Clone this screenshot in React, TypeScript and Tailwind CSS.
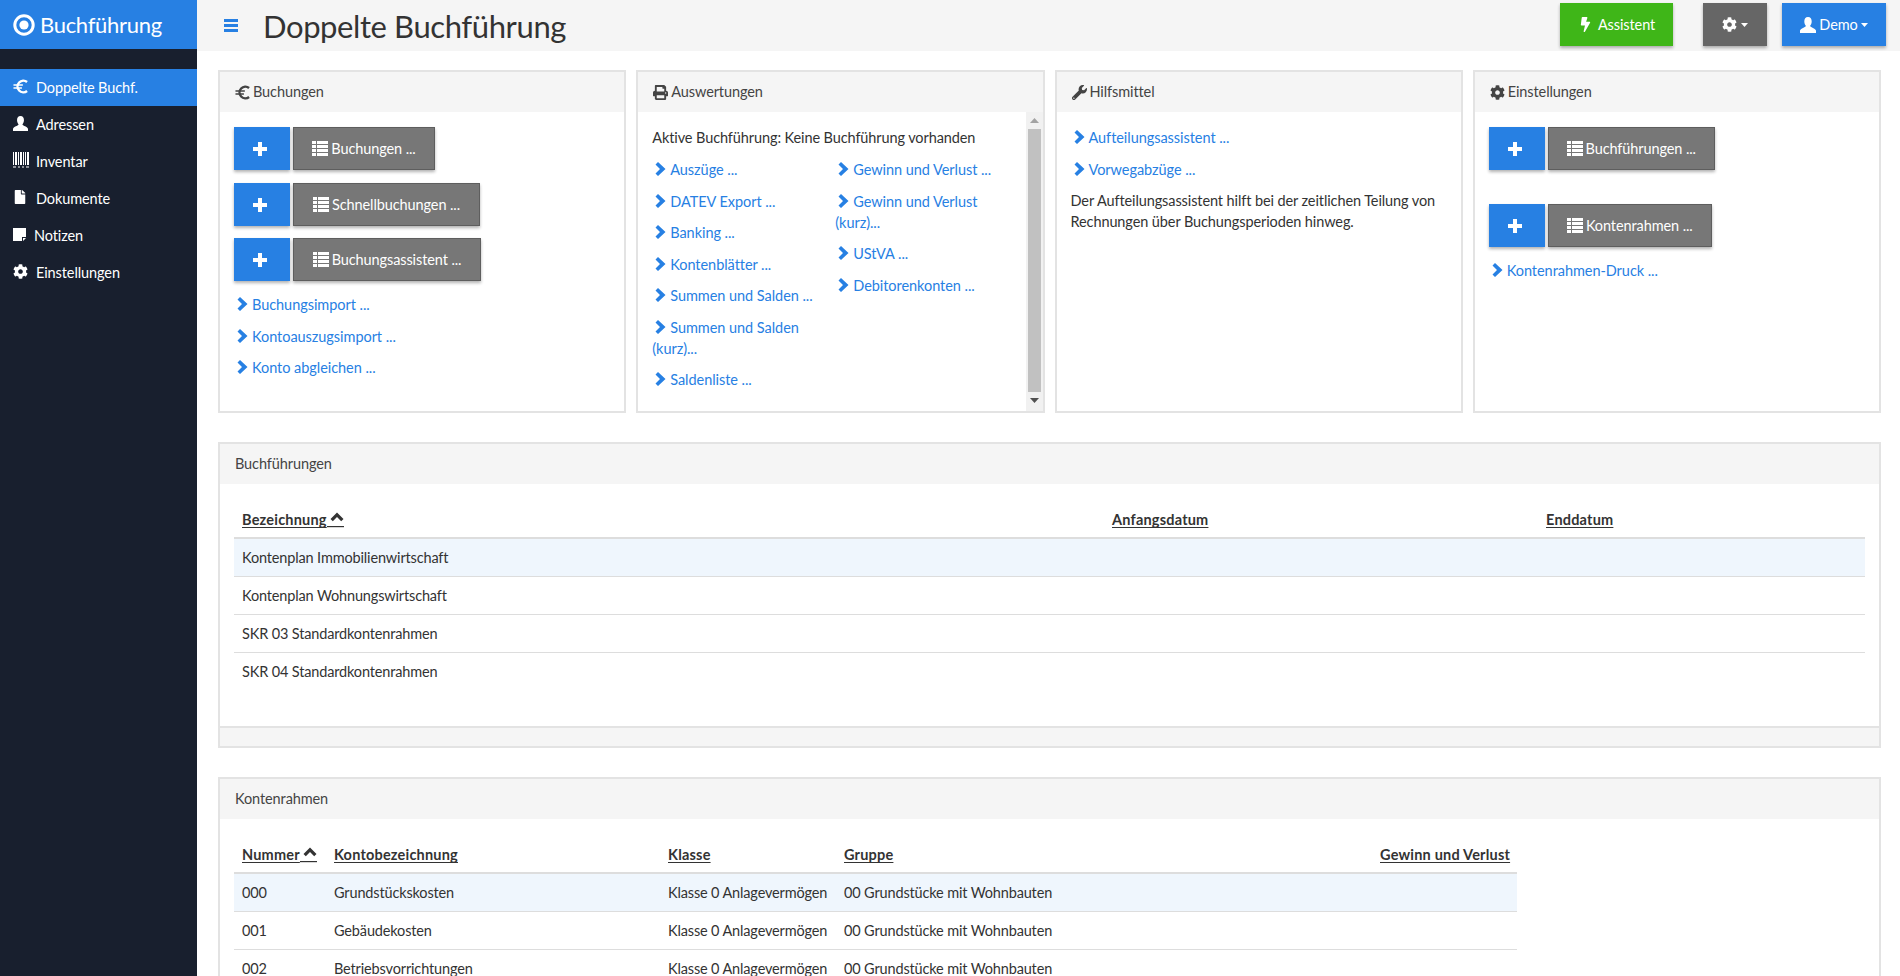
import React from "react";
import { FaBolt, FaCog, FaFile, FaPrint, FaWrench } from "react-icons/fa";

const Euro = ({ s = 15 }: { s?: number }) => (
  <svg width={s} height={s} viewBox="0 0 16 16" fill="none" stroke="currentColor">
    <path d="M15 3.2A6.2 6.2 0 1 0 15 12.8" strokeWidth="2.6" />
    <path d="M0.5 6.4H10.5M0.5 9.6H9.5" strokeWidth="1.6" />
  </svg>
);
const User = ({ s = 15 }: { s?: number }) => (
  <svg width={s} height={s} viewBox="0 0 16 16" fill="currentColor">
    <path d="M8 0C5.4 0 4.3 2 4.3 4.5 4.3 6.5 5.3 8 6 9 5 10.6 1 11 0 13.5V16H16V13.5C15 11 11 10.6 10 9 10.7 8 11.7 6.5 11.7 4.5 11.7 2 10.6 0 8 0Z" />
  </svg>
);
const Barcode = () => (
  <svg width="16" height="16" viewBox="0 0 16 16" fill="currentColor">
    <path d="M0 0H1V13H0ZM2 0H4V13H2ZM5 0H6V13H5ZM7 0H9V13H7ZM10 0H11V13H10ZM12 0H13V13H12ZM14 0H16V13H14ZM0 14.5H3V15.5H0ZM5 14.5H7V15.5H5ZM9 14.5H11V15.5H9ZM13 14.5H16V15.5H13Z" />
  </svg>
);
const Note = () => (
  <svg width="13" height="13" viewBox="0 0 13 13" fill="currentColor">
    <path d="M0 0H13V9H9V13H0ZM10 10H13L10 13Z" />
  </svg>
);
const Plus = () => (
  <svg width="14" height="14" viewBox="0 0 14 14" fill="currentColor">
    <path d="M5 0H9V5H14V9H9V14H5V9H0V5H5Z" />
  </svg>
);
const ThList = () => (
  <svg width="16" height="15" viewBox="0 0 16 15" fill="currentColor">
    <path d="M0 0H4V3H0ZM5 0H16V3H5ZM0 4H4V7H0ZM5 4H16V7H5ZM0 8H4V11H0ZM5 8H16V11H5ZM0 12H4V15H0ZM5 12H16V15H5Z" />
  </svg>
);
const Chevron = () => (
  <svg width="11" height="14" viewBox="0 0 11 14" fill="currentColor" className="mr-[4px] ml-[3px] inline-block align-[-1px]">
    <path d="M3 0L10.5 7L3 14L0.5 11.5L5 7L0.5 2.5Z" />
  </svg>
);
const SortUp = () => (
  <svg width="17" height="18" viewBox="0 0 17 18" fill="currentColor" className="inline-block align-[-4px]">
    <path d="M10 1.5L16.5 8L14.2 10.2L10 6L5.8 10.2L3.5 8Z" />
    <path d="M0 15H17V16.2H0Z" />
  </svg>
);
const Caret = () => (
  <svg width="7" height="4" viewBox="0 0 7 4"><path d="M0 0h7L3.5 4z" fill="#fff" /></svg>
);
const Ring = () => (
  <svg width="22" height="22" viewBox="0 0 22 22">
    <circle cx="11" cy="11" r="9.2" fill="none" stroke="#fff" strokeWidth="3" />
    <circle cx="11" cy="11" r="4.6" fill="#fff" />
  </svg>
);

const nav = [
  { label: "Doppelte Buchf.", icon: <Euro />, active: true, w: "w-[36px]" },
  { label: "Adressen", icon: <User />, w: "w-[36px]" },
  { label: "Inventar", icon: <Barcode />, w: "w-[36px]" },
  { label: "Dokumente", icon: <FaFile size={14} />, w: "w-[36px]" },
  { label: "Notizen", icon: <Note />, w: "w-[34px]" },
  { label: "Einstellungen", icon: <FaCog size={15} />, w: "w-[36px]" },
];

function ActionRow({ label, w, className = "" }: { label: string; w: string; className?: string }) {
  return (
    <div className={"flex gap-[3px] " + className}>
      <button className="flex h-[43px] w-[56px] items-center justify-center bg-[#2780e3] pr-[4px] text-white shadow-[0_2px_3px_rgba(0,0,0,0.3)]">
        <Plus />
      </button>
      <button className={"flex h-[43px] items-center justify-center gap-[3px] border border-[#5e5e5e] bg-[#777777] text-white shadow-[0_2px_3px_rgba(0,0,0,0.3)] " + w}>
        <ThList />
        <span>{label}</span>
      </button>
    </div>
  );
}

function LinkItem({ children, className = "" }: { children: React.ReactNode; className?: string }) {
  return (
    <a className={"block leading-[21px] tracking-[-0.05px] text-[#2780e3] " + className}>
      <Chevron />
      {children}
    </a>
  );
}

function Panel({ title, icon, children }: { title: string; icon: React.ReactNode; children: React.ReactNode }) {
  return (
    <section className="flex h-[343px] flex-col border-2 border-[#e3e3e3]">
      <header className="flex h-[40px] shrink-0 items-center gap-[3px] bg-[#f5f5f5] px-[15px] text-[#444]">
        {icon}
        <span>{title}</span>
      </header>
      {children}
    </section>
  );
}

function ScrollTrack() {
  return (
    <div className="flex w-[17px] shrink-0 flex-col items-center bg-[#f1f1f1]">
      <svg width="9" height="5" viewBox="0 0 9 5" className="mt-[6px] mb-[6px]"><path d="M4.5 0L9 5H0z" fill="#a3a3a3" /></svg>
      <div className="h-[263px] w-[13px] bg-[#c1c1c1]" />
      <svg width="9" height="5" viewBox="0 0 9 5" className="mt-[6px]"><path d="M4.5 5L9 0H0z" fill="#505050" /></svg>
    </div>
  );
}

function SortHead({ children, sorted }: { children: React.ReactNode; sorted?: boolean }) {
  return (
    <span className="leading-[21px] font-bold tracking-[0.2px] text-[#333]">
      <span className="underline underline-offset-2">{children}</span>
      {sorted && <SortUp />}
    </span>
  );
}

function TablePanel({ title, h, children }: { title: string; h?: string; children: React.ReactNode }) {
  return (
    <section className={"border-2 border-[#e3e3e3] " + (h ?? "")}>
      <header className="flex h-[40px] items-center bg-[#f5f5f5] px-[15px] text-[#444]">{title}</header>
      {children}
    </section>
  );
}

const Row = ({ cells, widths, first }: { cells: string[]; widths: string[]; first?: boolean }) => (
  <div className={"flex h-[38px] items-center border-b border-[#dddddd] tracking-[-0.15px] whitespace-nowrap text-[#333] " + (first ? "bg-[#eff6fd]" : "")}>
    {cells.map((c, i) => (
      <div key={i} className={"px-[8px] " + widths[i]}>{c}</div>
    ))}
  </div>
);

export default function App() {
  const w1 = ["w-[870px]", "w-[434px]", "flex-1"];
  const w2 = ["w-[92px]", "w-[334px]", "w-[176px]", "w-[536px]", "w-[145px]"];
  return (
    <div className="flex h-screen overflow-hidden bg-white font-[Lato,sans-serif] text-[14.5px] tracking-[-0.1px] text-[#333]">
      <aside className="w-[197px] shrink-0 bg-[#181f2e] text-white">
        <div className="flex h-[49px] items-center gap-[5px] bg-[#2780e3] pl-[13px] text-[22px] tracking-[-0.3px]">
          <Ring />
          <span>Buchführung</span>
        </div>
        <nav className="mt-[20px]">
          {nav.map((n) => (
            <div key={n.label} className={"flex h-[37px] items-center " + (n.active ? "bg-[#2780e3]" : "")}>
              <span className={"mb-[3px] flex justify-start pl-[13px] " + n.w}>{n.icon}</span>
              <span>{n.label}</span>
            </div>
          ))}
        </nav>
      </aside>
      <main className="min-w-0 flex-1">
        <div className="flex h-[51px] items-start bg-[#f5f5f5]">
          <svg width="14" height="13" viewBox="0 0 14 13" fill="#2780e3" className="mt-[19px] ml-[27px]"><path d="M0 0H14V3H0ZM0 5H14V8H0ZM0 10H14V13H0Z" /></svg>
          <h1 className="mt-[6px] ml-[25px] text-[31px] leading-[40px] tracking-[-0.4px] text-[#333]">Doppelte Buchführung</h1>
          <div className="mt-[3px] ml-auto flex pr-[14px] text-white">
            <button className="flex h-[43px] w-[113px] items-center justify-center gap-[5px] bg-[#3fb618] shadow-[0_2px_3px_rgba(0,0,0,0.3)]"><FaBolt size={15} /><span>Assistent</span></button>
            <button className="ml-[30px] flex h-[43px] w-[64px] items-center justify-center gap-[4px] bg-[#666666] shadow-[0_2px_3px_rgba(0,0,0,0.3)]"><FaCog size={15} /><Caret /></button>
            <button className="ml-[15px] flex h-[43px] w-[104px] items-center justify-center gap-[3px] bg-[#2780e3] shadow-[0_2px_3px_rgba(0,0,0,0.3)]"><User s={16} /><span>Demo</span><Caret /></button>
          </div>
        </div>
        <div className="pt-[19px] pr-[19px] pl-[21px]">
          <div className="grid grid-cols-4 gap-[10px]">
            <Panel title="Buchungen" icon={<Euro />}>
              <div className="px-[14px] pt-[15px]">
                <ActionRow label="Buchungen ..." w="w-[142px]" />
                <ActionRow label="Schnellbuchungen ..." w="w-[187px]" className="mt-[13px]" />
                <ActionRow label="Buchungsassistent ..." w="w-[188px]" className="mt-[12px]" />
                <div className="mt-[13px] space-y-[10.5px]">
                  <LinkItem>Buchungsimport ...</LinkItem>
                  <LinkItem>Kontoauszugsimport ...</LinkItem>
                  <LinkItem>Konto abgleichen ...</LinkItem>
                </div>
              </div>
            </Panel>
            <Panel title="Auswertungen" icon={<FaPrint size={15} />}>
              <div className="flex min-h-0 flex-1">
                <div className="min-w-0 flex-1 px-[14px] pt-[15px]">
                  <p className="leading-[21px]">Aktive Buchführung: Keine Buchführung vorhanden</p>
                  <div className="mt-[11px] flex">
                    <div className="w-[183px] shrink-0 space-y-[10.5px]">
                      <LinkItem>Auszüge ...</LinkItem>
                      <LinkItem>DATEV Export ...</LinkItem>
                      <LinkItem>Banking ...</LinkItem>
                      <LinkItem>Kontenblätter ...</LinkItem>
                      <LinkItem>Summen und Salden ...</LinkItem>
                      <LinkItem>Summen und Salden<br />(kurz)...</LinkItem>
                      <LinkItem>Saldenliste ...</LinkItem>
                    </div>
                    <div className="flex-1 space-y-[10.5px]">
                      <LinkItem>Gewinn und Verlust ...</LinkItem>
                      <LinkItem>Gewinn und Verlust<br />(kurz)...</LinkItem>
                      <LinkItem>UStVA ...</LinkItem>
                      <LinkItem>Debitorenkonten ...</LinkItem>
                    </div>
                  </div>
                </div>
                <ScrollTrack />
              </div>
            </Panel>
            <Panel title="Hilfsmittel" icon={<FaWrench size={15} />}>
              <div className="px-[14px] pt-[15px]">
                <div className="space-y-[10.5px]">
                  <LinkItem>Aufteilungsassistent ...</LinkItem>
                  <LinkItem>Vorwegabzüge ...</LinkItem>
                </div>
                <p className="mt-[10px] leading-[21px]">Der Aufteilungsassistent hilft bei der zeitlichen Teilung von Rechnungen über Buchungsperioden hinweg.</p>
              </div>
            </Panel>
            <Panel title="Einstellungen" icon={<FaCog size={15} />}>
              <div className="px-[14px] pt-[15px]">
                <ActionRow label="Buchführungen ..." w="w-[167px]" />
                <ActionRow label="Kontenrahmen ..." w="w-[164px]" className="mt-[34px]" />
                <div className="mt-[13px]"><LinkItem>Kontenrahmen-Druck ...</LinkItem></div>
              </div>
            </Panel>
          </div>
          <div className="mt-[29px]">
            <TablePanel title="Buchführungen" h="flex h-[306px] flex-col">
              <div className="flex-1 px-[14px]">
                <div className="flex h-[55px] items-end border-b-2 border-[#dddddd] pb-[6px]">
                  <div className={"px-[8px] " + w1[0]}><SortHead sorted>Bezeichnung</SortHead></div>
                  <div className={"px-[8px] " + w1[1]}><SortHead>Anfangsdatum</SortHead></div>
                  <div className={"px-[8px] " + w1[2]}><SortHead>Enddatum</SortHead></div>
                </div>
                <Row first cells={["Kontenplan Immobilienwirtschaft", "", ""]} widths={w1} />
                <Row cells={["Kontenplan Wohnungswirtschaft", "", ""]} widths={w1} />
                <Row cells={["SKR 03 Standardkontenrahmen", "", ""]} widths={w1} />
                <div className="flex h-[38px] items-center px-[8px] tracking-[-0.15px]">SKR 04 Standardkontenrahmen</div>
              </div>
              <div className="h-[20px] border-t-2 border-[#e3e3e3] bg-[#f5f5f5]" />
            </TablePanel>
          </div>
          <div className="mt-[29px]">
            <TablePanel title="Kontenrahmen">
              <div className="w-[1297px] pl-[14px]">
                <div className="flex h-[55px] items-end border-b-2 border-[#dddddd] pb-[6px]">
                  <div className={"px-[8px] " + w2[0]}><SortHead sorted>Nummer</SortHead></div>
                  <div className={"px-[8px] " + w2[1]}><SortHead>Kontobezeichnung</SortHead></div>
                  <div className={"px-[8px] " + w2[2]}><SortHead>Klasse</SortHead></div>
                  <div className={"px-[8px] " + w2[3]}><SortHead>Gruppe</SortHead></div>
                  <div className={"px-[8px] whitespace-nowrap " + w2[4]}><SortHead>Gewinn und Verlust</SortHead></div>
                </div>
                <Row first cells={["000", "Grundstückskosten", "Klasse 0 Anlagevermögen", "00 Grundstücke mit Wohnbauten", ""]} widths={w2} />
                <Row cells={["001", "Gebäudekosten", "Klasse 0 Anlagevermögen", "00 Grundstücke mit Wohnbauten", ""]} widths={w2} />
                <Row cells={["002", "Betriebsvorrichtungen", "Klasse 0 Anlagevermögen", "00 Grundstücke mit Wohnbauten", ""]} widths={w2} />
              </div>
            </TablePanel>
          </div>
        </div>
      </main>
    </div>
  );
}
